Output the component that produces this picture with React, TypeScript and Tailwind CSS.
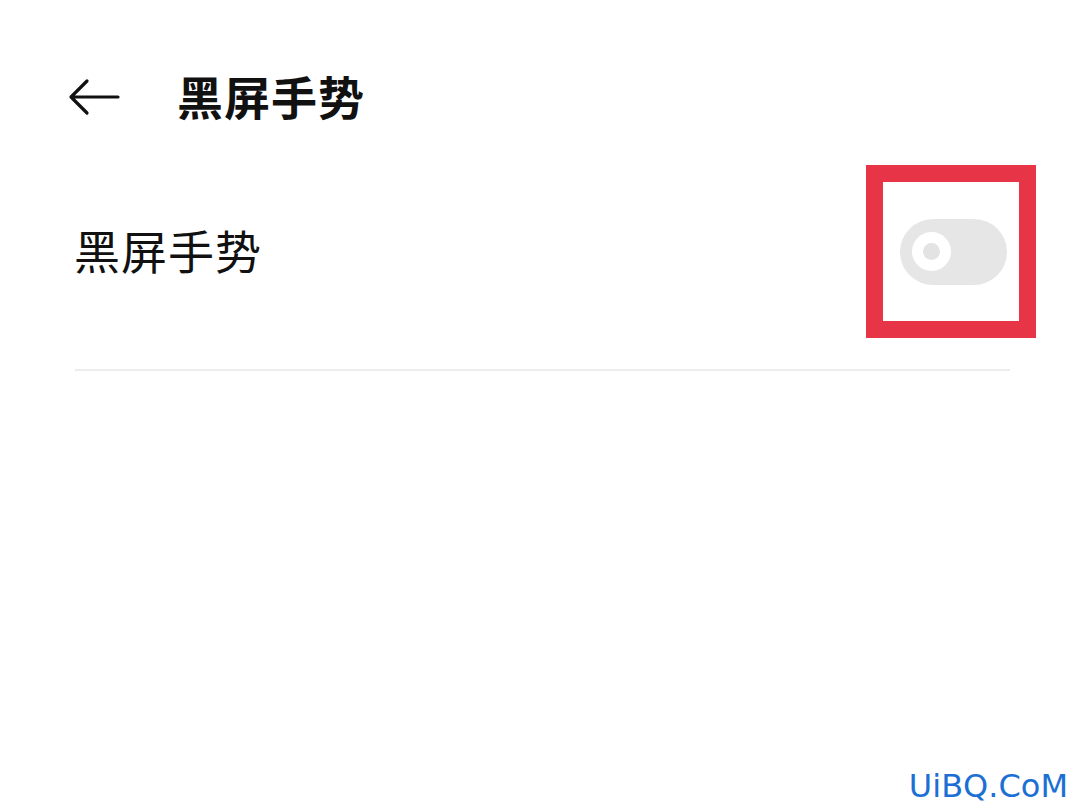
import React from 'react';

export default function App() {
    return (
        <div className="relative w-[1080px] h-[810px] bg-white overflow-hidden" style={{ fontFamily: '"Noto Sans CJK SC", "Noto Sans", sans-serif' }}>
            {/* Header */}
            <div className="flex items-center h-[70px] mt-[62px] pl-[68px]">
                <svg width="54" height="40" viewBox="0 0 54 40" className="shrink-0">
                    <path d="M3 20 H50 M3 20 L19 4 M3 20 L19 36" stroke="#111" strokeWidth="3.2" fill="none" strokeLinecap="round" strokeLinejoin="round" />
                </svg>
                <h1 className="ml-[55px] -mt-[4px] text-[46px] leading-none font-bold text-[#111] tracking-[1px]">黑屏手势</h1>
            </div>

            {/* Setting row */}
            <div className="flex items-center justify-between mt-[33px] pl-[74px] pr-[44px]">
                <span className="-mt-[5px] text-[46px] leading-none text-[#111] tracking-[1px]">黑屏手势</span>
                <div className="w-[170px] h-[173px] border-[17px] border-[#e83447] flex items-center justify-center pl-[4px]">
                    <div className="w-[107px] h-[66px] rounded-full bg-[#e6e6e6] flex items-center pl-[12px]">
                        <div className="w-[39px] h-[39px] rounded-full bg-white flex items-center justify-center">
                            <div className="w-[17px] h-[17px] rounded-full bg-[#e3e3e3]" />
                        </div>
                    </div>
                </div>
            </div>

            {/* Divider */}
            <div className="mt-[31px] ml-[75px] w-[935px] h-[2px] bg-[#ececec]" />

            {/* Watermark */}
            <div className="absolute right-[12px] bottom-[8px] text-[32px] leading-none text-[#1c6fd3]" style={{ fontFamily: '"DejaVu Sans", sans-serif' }}>
                UiBQ.CoM
            </div>
        </div>
    );
}
